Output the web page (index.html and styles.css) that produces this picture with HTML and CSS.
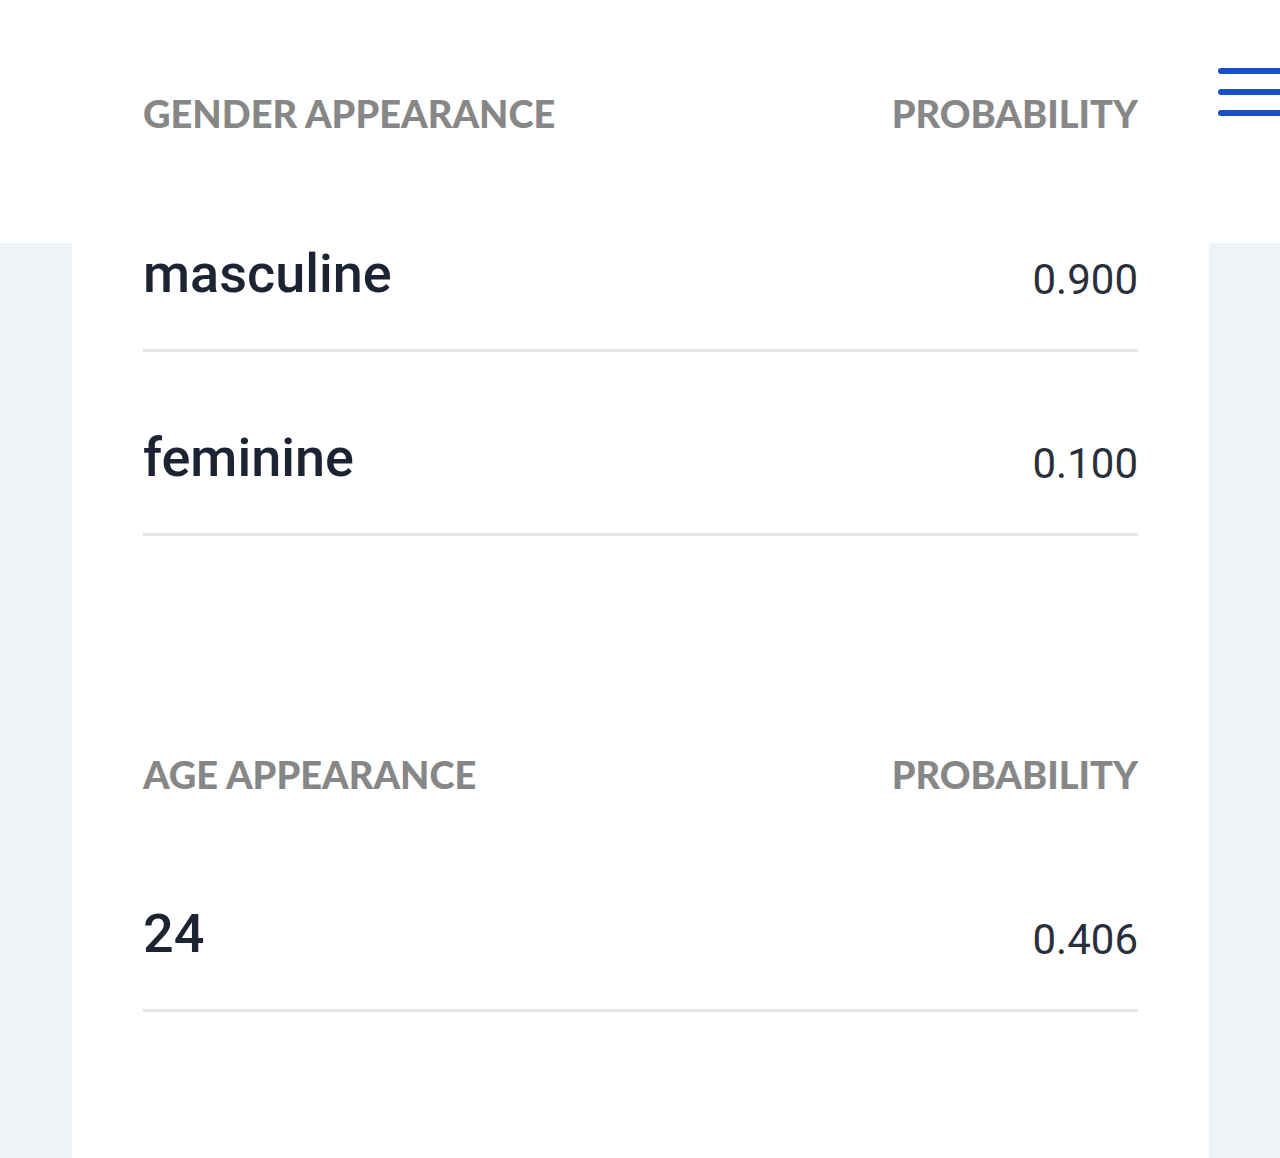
FILE: index.html
```html
<!DOCTYPE html>
<html lang="en">
<head>
<meta charset="utf-8">
<title>Appearance</title>
<link rel="stylesheet" href="styles.css">
</head>
<body>
<header class="top">
  <div class="head-row">
    <span class="head-label">GENDER APPEARANCE</span>
    <span class="head-label">PROBABILITY</span>
  </div>
  <button class="menu" aria-label="Menu">
    <svg width="80" height="60" viewBox="0 0 80 60">
      <g stroke="#1a4fca" stroke-width="6" stroke-linecap="round">
        <line x1="9" y1="8" x2="90" y2="8"/>
        <line x1="9" y1="29" x2="90" y2="29"/>
        <line x1="9" y1="50" x2="90" y2="50"/>
      </g>
    </svg>
  </button>
</header>
<main class="page">
  <section class="card">
    <div class="row row-first">
      <span class="label">masculine</span>
      <span class="value">0.900</span>
    </div>
    <div class="row">
      <span class="label">feminine</span>
      <span class="value">0.100</span>
    </div>
    <div class="head-row section-head">
      <span class="head-label">AGE APPEARANCE</span>
      <span class="head-label">PROBABILITY</span>
    </div>
    <div class="row">
      <span class="label">24</span>
      <span class="value">0.406</span>
    </div>
  </section>
</main>
</body>
</html>
```
FILE: styles.css
```css
* { box-sizing: border-box; }
html, body {
  margin: 0;
  padding: 0;
  overflow: hidden;
}
body {
  width: 1280px;
  height: 1158px;
  background: #eef3f7;
  font-family: Roboto, "Noto Sans", sans-serif;
  position: relative;
}
.top {
  height: 243px;
  background: #ffffff;
  padding: 94px 142px 0 143px;
  position: relative;
}
.head-row {
  display: flex;
  justify-content: space-between;
  align-items: flex-start;
}
.head-label {
  font-family: Lato, "Open Sans", sans-serif;
  font-weight: 900;
  font-size: 38px;
  line-height: 38px;
  color: #878787;
  letter-spacing: 0;
}
.menu {
  position: absolute;
  left: 1212px;
  top: 63px;
  width: 80px;
  height: 60px;
  padding: 0;
  border: 0;
  background: none;
  overflow: hidden;
}
.menu svg { display: block; overflow: visible; }
.page {
  padding: 0 71px 0 72px;
}
.card {
  background: #ffffff;
  padding: 0 71px 146px 71px;
}
.row {
  display: flex;
  justify-content: space-between;
  align-items: flex-start;
  height: 184px;
  padding-top: 79px;
  border-bottom: 3px solid #e4e6e9;
}
.row-first {
  height: 109px;
  padding-top: 4px;
}
.label {
  font-size: 54px;
  line-height: 54px;
  font-weight: 500;
  color: #1c2434;
}
.value {
  font-size: 42px;
  line-height: 54px;
  padding-top: 6px;
  font-weight: 400;
  color: #2a303b;
}
.section-head {
  padding: 219px 0 35px;
}
```
